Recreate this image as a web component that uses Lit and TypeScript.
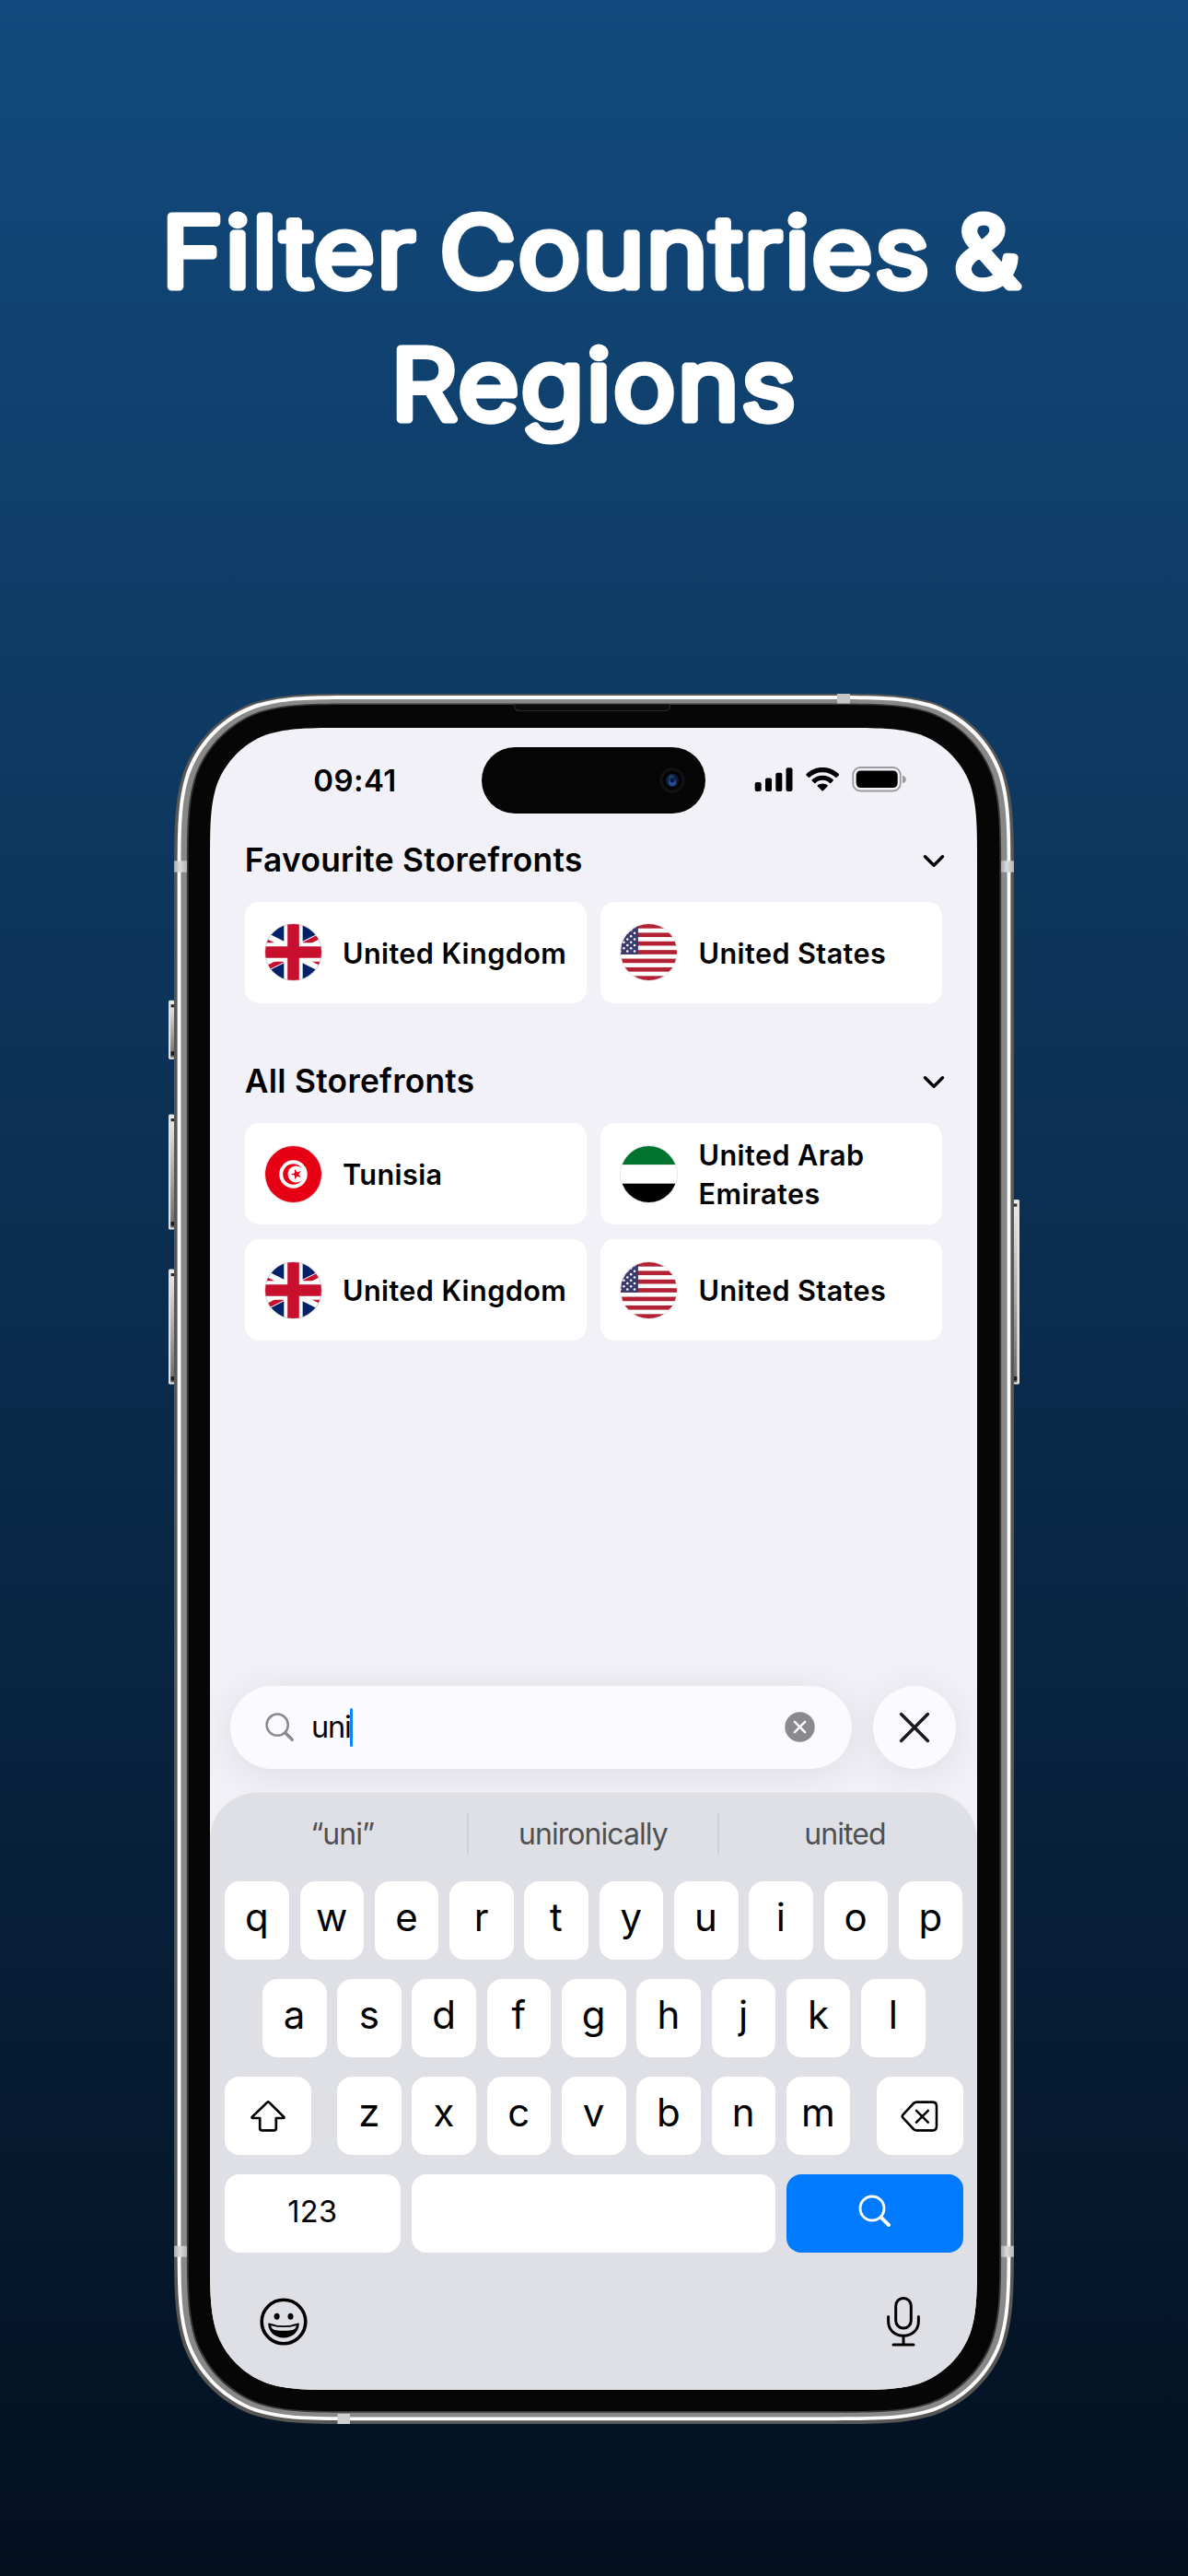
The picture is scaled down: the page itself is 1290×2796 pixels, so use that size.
import { LitElement, html, svg, css, unsafeCSS, TemplateResult } from "lit";
import { customElement, property } from "lit/decorators.js";

/** Rounded rectangle with continuous-curvature corners. */
function smoothRect(x: number, y: number, w: number, h: number, r: number): string {
  const a = 1.52866498 * r, b = 1.08849296 * r, c = 0.86840694 * r;
  const d = 0.63149379 * r, e = 0.07491139 * r, f = 0.37282383 * r, g = 0.16905956 * r;
  const R = x + w, B = y + h;
  const n = (v: number) => Math.round(v * 100) / 100;
  const p = (...v: number[]) => v.map(n).join(" ");
  return [
    "M" + p(x + a, y), "L" + p(R - a, y),
    "C" + p(R - b, y, R - c, y, R - d, y + e),
    "C" + p(R - f, y + g, R - g, y + f, R - e, y + d),
    "C" + p(R, y + c, R, y + b, R, y + a),
    "L" + p(R, B - a),
    "C" + p(R, B - b, R, B - c, R - e, B - d),
    "C" + p(R - g, B - f, R - f, B - g, R - d, B - e),
    "C" + p(R - c, B, R - b, B, R - a, B),
    "L" + p(x + a, B),
    "C" + p(x + b, B, x + c, B, x + d, B - e),
    "C" + p(x + f, B - g, x + g, B - f, x + e, B - d),
    "C" + p(x, B - c, x, B - b, x, B - a),
    "L" + p(x, y + a),
    "C" + p(x, y + b, x, y + c, x + e, y + d),
    "C" + p(x + g, y + f, x + f, y + g, x + d, y + e),
    "C" + p(x + c, y, x + b, y, x + a, y), "Z",
  ].join("");
}

type Country = { name: string; flag: string };
const UK: Country = { name: "United Kingdom", flag: "gb" };
const US: Country = { name: "United States", flag: "us" };
const FAVOURITES: Country[] = [UK, US];
const ALL: Country[] = [
  { name: "Tunisia", flag: "tn" },
  { name: "United Arab Emirates", flag: "ae" },
  UK,
  US,
];

function starPoints(cx: number, cy: number, r: number, rot: number): string {
  return Array.from({ length: 10 }, (_, i) => {
    const rad = i % 2 ? r * 0.382 : r;
    const t = rot + (i * Math.PI) / 5;
    return `${(cx + rad * Math.cos(t)).toFixed(2)},${(cy + rad * Math.sin(t)).toFixed(2)}`;
  }).join(" ");
}

const usStars = Array.from({ length: 9 }, (_, row) =>
  Array.from({ length: 11 }, (_, col) => ({ row, col })).filter((s) => (s.row + s.col) % 2 === 0)
).flat();

const FLAGS: Record<string, () => TemplateResult> = {
  gb: () => html`<svg class="flag" viewBox="15 0 30 30">
    <rect x="15" width="30" height="30" fill="#012169" />
    <path d="M0 0L60 30M60 0L0 30" stroke="#fff" stroke-width="6" />
    <path d="M0 0L30 15L28.9 17.24L-1.1 2.24ZM60 0L30 15L28.9 12.76L58.9 -2.24ZM60 30L30 15L31.1 12.76L61.1 27.76ZM0 30L30 15L31.1 17.24L1.1 32.24Z" fill="#c8102e" />
    <path d="M30 0V30M0 15H60" stroke="#fff" stroke-width="10" />
    <path d="M30 0V30M0 15H60" stroke="#c8102e" stroke-width="6.2" />
  </svg>`,
  us: () => html`<svg class="flag" viewBox="58.5 0 130 130">
    <rect width="247" height="130" fill="#fff" />
    ${[0, 1, 2, 3, 4, 5, 6].map((i) => svg`<rect y=${i * 20} width="247" height="10" fill="#b22234" />`)}
    <rect width="98.8" height="70" fill="#3c3b6e" />
    ${usStars.map((s) => svg`<circle cx=${(s.col + 1) * 8.23} cy=${(s.row + 1) * 7} r="2.7" fill="#fff" />`)}
  </svg>`,
  tn: () => html`<svg class="flag" viewBox="0 0 100 100">
    <rect width="100" height="100" fill="#e70013" />
    <circle cx="50" cy="50" r="25" fill="#fff" />
    <circle cx="50" cy="50" r="18.5" fill="#e70013" />
    <circle cx="55" cy="50" r="14.8" fill="#fff" />
    <polygon points=${starPoints(55.5, 50, 10, Math.PI)} fill="#e70013" />
  </svg>`,
  ae: () => html`<svg class="flag" viewBox="0 0 90 90">
    <rect width="90" height="30" fill="#00732f" />
    <rect y="30" width="90" height="30" fill="#fff" />
    <rect y="60" width="90" height="30" fill="#000" />
  </svg>`,
};

@customElement("device-frame")
class DeviceFrame extends LitElement {
  static styles = css`
    :host { display: block; }
    .frame { display: block; overflow: visible; }
  `;
  render() {
    const button = (x: number, y: number, h: number, right: boolean) => svg`
      <rect x=${x} y=${y} width="6.5" height=${h} rx="1.6" fill="#e2e2e2" />
      <rect x=${right ? x : x + 2.2} y=${y + 2} width="3.8" height=${h - 4} fill="url(#btn)" />
      <rect x=${right ? x : x + 2.6} y=${y + 4.5} width="3.8" height="3.2" fill="#2b2b2b" />
      <rect x=${right ? x : x + 2.6} y=${y + h - 8.5} width="3.8" height="4.5" fill="#1d1d1d" />`;
    return html`<svg class="frame" width="912" height="1878" viewBox="0 0 912 1878">
      <defs>
        <linearGradient id="btn" x1="0" y1="0" x2="0" y2="1">
          <stop offset="0" stop-color="#ececec" /><stop offset="1" stop-color="#6a6a68" />
        </linearGradient>
        <linearGradient id="band" x1="0" y1="0" x2="1" y2="0">
          <stop offset="0" stop-color="#a9a9a9" /><stop offset=".45" stop-color="#dcdcdc" /><stop offset="1" stop-color="#b4b4b4" />
        </linearGradient>
      </defs>
      ${button(-6, 332.7, 64, false)} ${button(-6, 456.5, 125, false)} ${button(-6, 624.5, 125, false)}
      ${button(911.5, 549, 200.5, true)}
      <path d=${smoothRect(0, 0, 912, 1878, 135)} fill="#575755" />
      <path d=${smoothRect(3.6, 1.9, 904.8, 1872.3, 132)} fill="#fbfbfb" />
      <path d=${smoothRect(7.4, 6, 897.2, 1864.5, 128.5)} fill="#888887" />
      <path d=${smoothRect(13.8, 10.6, 884.4, 1855.2, 123)} fill="#3a3a3a" />
      <path d=${smoothRect(15.6, 12, 880.8, 1852, 121.5)} fill="#060606" />
      <path d="M370 11.5V14.5Q371 18.5 374 18.5H534.5Q537.5 18.5 538.3 14.5V11.5" fill="#0b0b0b" stroke="#262626" stroke-width="1.2" />
      <rect x="0" y="181.3" width="14" height="12.4" fill="url(#band)" />
      <rect x="898" y="181.3" width="14" height="12.4" fill="url(#band)" />
      <rect x="0" y="1684.7" width="14" height="12" fill="url(#band)" />
      <rect x="898" y="1684.7" width="14" height="12" fill="url(#band)" />
      <rect x="720" y="0" width="14" height="10.5" fill="#c6c6c6" />
      <rect x="177.5" y="1867" width="13.5" height="11" fill="#cfcfcf" />
    </svg>`;
  }
}

@customElement("status-bar")
class StatusBar extends LitElement {
  static styles = css`
    :host { display: grid; grid-template-columns: 295px 243px 295px; align-items: center; height: 72px; padding-top: 21px; }
    .time { font-size: 33px; font-weight: 560; text-align: center; padding-left: 20px; letter-spacing: 0.4px; line-height: 40px; }
    .island { height: 72px; border-radius: 36px; background: #050505; display: flex; justify-content: flex-end; align-items: center; padding-right: 22px; box-sizing: border-box; }
    .icons { padding: 0 0 2px 53px; display: flex; align-items: center; }
    svg { display: block; }
  `;
  render() {
    return html`
      <div class="time">09:41</div>
      <div class="island">
        <svg width="28" height="28" viewBox="0 0 28 28">
          <circle cx="14" cy="14" r="13.7" fill="#121212" /><circle cx="14" cy="14" r="10.5" fill="#040404" />
          <circle cx="14" cy="14" r="7" fill="#0e1f45" /><circle cx="13" cy="11" r="3" fill="#205070" opacity=".7" />
          <circle cx="14" cy="16" r="4" fill="#2f66c8" opacity=".7" /><circle cx="14" cy="14" r="2.5" fill="#0a1440" />
        </svg>
      </div>
      <div class="icons">
        <svg width="168" height="28" viewBox="0 0 168 28">
          <rect x=".7" y="17" width="7" height="10" rx="2" /><rect x="12" y="12.5" width="7" height="14.5" rx="2" />
          <rect x="23.3" y="6.8" width="7" height="20.2" rx="2" /><rect x="34.5" y="1.2" width="7" height="25.8" rx="2" />
          <g transform="translate(56.2 1)">
            <path d="M18 0C25 0 31.4 2.7 35.7 7.2Q36.2 7.8 35.7 8.4L33.3 10.8Q32.7 11.3 32.1 10.8C28.4 7.2 23.4 5.2 18 5.2S7.6 7.2 3.9 10.8Q3.3 11.3 2.7 10.8L.3 8.4Q-.2 7.8 .3 7.2C4.6 2.7 11 0 18 0Z" />
            <path d="M18 8.7C22.6 8.7 26.6 10.4 29.5 13.3Q30.1 13.9 29.5 14.5L27 16.9Q26.4 17.4 25.8 16.9C23.7 14.9 21 13.8 18 13.8S12.3 14.9 10.2 16.9Q9.6 17.4 9 16.9L6.5 14.5Q5.9 13.9 6.5 13.3C9.4 10.4 13.4 8.7 18 8.7Z" />
            <path d="M18 17.4C20.2 17.4 22 18.1 23.4 19.3Q24 19.9 23.4 20.5L18.7 25.2Q18 25.8 17.3 25.2L12.6 20.5Q12 19.9 12.6 19.3C14 18.1 15.8 17.4 18 17.4Z" />
          </g>
          <rect x="107.2" y="1" width="51.6" height="25.5" rx="8" fill="none" stroke="#9c9b9f" stroke-width="1.8" />
          <rect x="110.7" y="4.4" width="45" height="18.7" rx="5" />
          <path d="M161 9.7Q164.8 10.7 164.8 13.9T161 18.1Z" fill="#9c9b9f" />
        </svg>
      </div>`;
  }
}

@customElement("storefront-section")
class StorefrontSection extends LitElement {
  @property() heading = "";
  @property({ attribute: false }) countries: Country[] = [];
  static styles = css`
    :host { display: block; }
    .head { display: flex; justify-content: space-between; align-items: center; height: 44px; }
    .heading { font-size: 35.3px; font-weight: 560; letter-spacing: 0.3px; line-height: 43px; padding-bottom: 1px; white-space: nowrap; margin: 0; }
    .chevron { display: block; margin: 2px -3px 0 0; }
    .grid { display: grid; grid-template-columns: 371px 371px; gap: 15.6px; margin-top: 22.7px; }
    .card { height: 110.3px; box-sizing: border-box; border-radius: 15px; background: #fff; display: flex; align-items: center; gap: 23.3px; padding-left: 22px; }
    .flag { flex: none; display: block; width: 61px; height: 61px; border-radius: 50%; box-shadow: 0 0 0 1px rgba(0, 0, 0, 0.1); }
    .name { font-size: 30.6px; font-weight: 560; line-height: 41.6px; letter-spacing: 0.4px; width: 230px; padding-top: 1px; }
    .name.wide { white-space: nowrap; }
  `;
  render() {
    return html`
      <div class="head">
        <h2 class="heading">${this.heading}</h2>
        <svg class="chevron" width="24" height="16" viewBox="0 0 24 16"><path d="M2.5 2.8L12 12.3L21.5 2.8" fill="none" stroke="#000" stroke-width="3.4" stroke-linecap="round" stroke-linejoin="round" /></svg>
      </div>
      <div class="grid">
        ${this.countries.map((c) => html`<div class="card">${FLAGS[c.flag]()}<span class="name ${c.flag === "ae" ? "" : "wide"}">${c.name}</span></div>`)}
      </div>`;
  }
}

@customElement("search-bar")
class SearchBar extends LitElement {
  static styles = css`
    :host { display: flex; gap: 22.8px; padding: 0 22px; }
    .field, .close { height: 90.5px; background: #fbfaff; box-shadow: 0 6px 46px rgba(0, 0, 0, 0.09); }
    .field { width: 675px; box-sizing: border-box; border-radius: 46px; display: flex; align-items: center; padding: 0 40px 0 38px; }
    .close { width: 90.5px; border-radius: 50%; display: flex; align-items: center; justify-content: center; }
    .query { font-size: 32.5px; letter-spacing: -1.2px; line-height: 42px; margin-left: 18px; padding-top: 1px; }
    .caret { width: 3.2px; height: 42px; border-radius: 1.6px; background: #0a84ff; margin-left: -1px; }
    .clear { margin-left: auto; }
    svg { display: block; }
  `;
  render() {
    return html`
      <div class="field">
        <svg width="32" height="32" viewBox="0 0 32 32" fill="none" stroke="#8a8a8e" stroke-linecap="round"><circle cx="13.2" cy="13.2" r="11.6" stroke-width="2.5" /><path d="M22 22L29.3 29.3" stroke-width="3.4" /></svg>
        <span class="query">uni</span><span class="caret"></span>
        <svg class="clear" width="33" height="33" viewBox="0 0 33 33"><circle cx="16.5" cy="16.5" r="16.2" fill="#8a8a8e" /><path d="M10.9 10.9L22.1 22.1M22.1 10.9L10.9 22.1" stroke="#fff" stroke-width="2.5" stroke-linecap="round" /></svg>
      </div>
      <div class="close">
        <svg width="34" height="34" viewBox="0 0 34 34"><path d="M2.6 2.6L31.4 31.4M31.4 2.6L2.6 31.4" stroke="#1a1a1c" stroke-width="3.6" stroke-linecap="round" /></svg>
      </div>`;
  }
}

@customElement("soft-keyboard")
class SoftKeyboard extends LitElement {
  static styles = css`
    :host { display: flex; flex-direction: column; box-sizing: border-box; height: 650px; background: #dfe0e5; border-radius: 52px 52px 0 0; box-shadow: inset 0 1.5px 0 rgba(255, 255, 255, 0.55); padding: 0 15px 0 15.7px; }
    .suggestions { display: grid; grid-template-columns: 270px 274.3px 273px; height: 45px; margin: 24px -8px 0 -7px; }
    .suggestion { text-align: center; font-size: 32px; line-height: 45px; letter-spacing: -0.95px; color: #505054; }
    .middle { box-shadow: inset 2px 0 0 #cfd0d5, inset -2px 0 0 #cfd0d5; }
    .rows { display: flex; flex-direction: column; gap: 21.2px; margin-top: 28.7px; }
    .row { display: flex; gap: 11.7px; justify-content: center; }
    .row.spread { justify-content: space-between; }
    .letters { display: flex; gap: 11.7px; }
    .key { width: 69.6px; height: 84.9px; box-sizing: border-box; border-radius: 16px; background: #fff; display: flex; align-items: center; justify-content: center; font-size: 42px; line-height: 50px; padding-bottom: 7px; }
    .letter { padding-right: 0.5px; }
    .fn { width: 94.3px; padding: 1px 0 0; }
    .num { width: 191.3px; font-size: 32.5px; letter-spacing: 0.3px; padding: 0 0 2px; }
    .space { width: 395px; }
    .go { width: 192px; background: #007aff; padding: 0 0 5px; }
    .tools { display: flex; justify-content: space-between; align-items: center; padding: 0 46.5px 0 38px; margin-top: 46px; height: 58px; }
    svg { display: block; }
  `;
  render() {
    const letters = (s: string) => [...s].map((l) => html`<div class="key letter">${l}</div>`);
    return html`
      <div class="suggestions">
        <div class="suggestion">“uni”</div>
        <div class="suggestion middle">unironically</div>
        <div class="suggestion">united</div>
      </div>
      <div class="rows">
        <div class="row">${letters("qwertyuiop")}</div>
        <div class="row">${letters("asdfghjkl")}</div>
        <div class="row spread">
          <div class="key fn"><svg width="40" height="36" viewBox="0 0 40 36"><path d="M18.9 2.9L2.6 18.6Q1.6 20 3.4 20H10.9V31Q10.9 33.4 13.3 33.4H26.1Q28.5 33.4 28.5 31V20H36Q37.8 20 36.8 18.6L20.9 2.9Q19.9 2 18.9 2.9Z" transform="translate(.3 0)" fill="none" stroke="#000" stroke-width="2.7" stroke-linejoin="round" /></svg></div>
          <div class="letters">${letters("zxcvbnm")}</div>
          <div class="key fn"><svg width="41" height="34" viewBox="0 0 41 34" fill="none" stroke="#000" stroke-width="2.6" stroke-linecap="round" stroke-linejoin="round"><path d="M17.5 1.6H34.5Q39 1.6 39 6V28Q39 32.4 34.5 32.4H17.5Q15.5 32.4 14 31L2.5 18.7Q1 17 2.5 15.3L14 3Q15.5 1.6 17.5 1.6Z" /><path d="M17 10.8L29.8 23.6M29.8 10.8L17 23.6" /></svg></div>
        </div>
        <div class="row spread">
          <div class="key num">123</div>
          <div class="key space"></div>
          <div class="key go"><svg width="36" height="36" viewBox="0 0 36 36" fill="none" stroke="#fff" stroke-linecap="round"><circle cx="15" cy="15" r="13" stroke-width="2.9" /><path d="M24.8 24.8L33 33" stroke-width="3.9" /></svg></div>
        </div>
      </div>
      <div class="tools">
        <svg width="52" height="52" viewBox="0 0 52 52"><circle cx="26" cy="26" r="23.8" fill="none" stroke="#000" stroke-width="3.6" /><ellipse cx="18.6" cy="20.2" rx="3" ry="3.5" /><ellipse cx="33.5" cy="20.2" rx="3" ry="3.5" /><path d="M10.2 27.4Q26 33 41.8 27.4Q43 27.2 42.8 29C41.8 37.6 35.5 43.4 26 43.4S10.2 37.6 9.2 29Q9 27.2 10.2 27.4ZM12 30.2C13 33.2 14.4 34.8 18 35.2Q26 36.4 34 35.2C37.6 34.8 39 33.2 40 30.2Q26 34 12 30.2Z" fill-rule="evenodd" /></svg>
        <svg width="38" height="56" viewBox="0 0 38 56" fill="none" stroke="#000" stroke-width="3" stroke-linecap="round"><rect x="10.7" y="2.4" width="16.6" height="32.6" rx="8.3" /><path d="M2.6 22.6V27.5C2.6 37 9.5 43.3 19 43.3S35.4 37 35.4 27.5V22.6M19 43.3V53M8 53H30" /></svg>
      </div>`;
  }
}

@customElement("app-root")
class AppRoot extends LitElement {
  static styles = css`
    :host { display: block; width: 1290px; height: 2796px; overflow: hidden; background: linear-gradient(#124a7d, #031020); font-family: Inter, "Liberation Sans", sans-serif; color: #000; }
    .page { display: flex; flex-direction: column; align-items: center; }
    .title { margin: 0; height: 753px; }
    .title text { font-size: 105px; font-weight: 300; letter-spacing: 2.7px; word-spacing: -9px; fill: #fff; stroke: #fff; stroke-width: 9px; stroke-linejoin: round; stroke-linecap: round; text-anchor: middle; }
    .phone { position: relative; width: 912px; height: 1878px; box-sizing: border-box; padding: 37px 40px 37px 39px; }
    .bezel { position: absolute; inset: 0; }
    .screen { position: relative; display: flex; flex-direction: column; width: 833px; height: 1804px; background: #f2f1f7; clip-path: path("${unsafeCSS(smoothRect(0, 0, 833, 1804, 98))}"); }
    .lists { flex: 1; display: flex; flex-direction: column; gap: 63.3px; padding: 29px 0 0 37.7px; }
    .lists storefront-section { width: 757.6px; }
    search-bar { margin-bottom: 24px; }
  `;
  render() {
    return html`
      <main class="page">
        <h1 class="title">
          <svg width="1290" height="753" viewBox="0 0 1290 753">
            <g transform="translate(645 0) scale(1.075 1)">
              <text x="-2.2" y="311">Filter Countries &amp;</text>
              <text x="0.6" y="455">Regions</text>
            </g>
          </svg>
        </h1>
        <div class="phone">
          <device-frame class="bezel"></device-frame>
          <div class="screen">
            <status-bar></status-bar>
            <div class="lists">
              <storefront-section heading="Favourite Storefronts" .countries=${FAVOURITES}></storefront-section>
              <storefront-section heading="All Storefronts" .countries=${ALL}></storefront-section>
            </div>
            <search-bar></search-bar>
            <soft-keyboard></soft-keyboard>
          </div>
        </div>
      </main>`;
  }
}
